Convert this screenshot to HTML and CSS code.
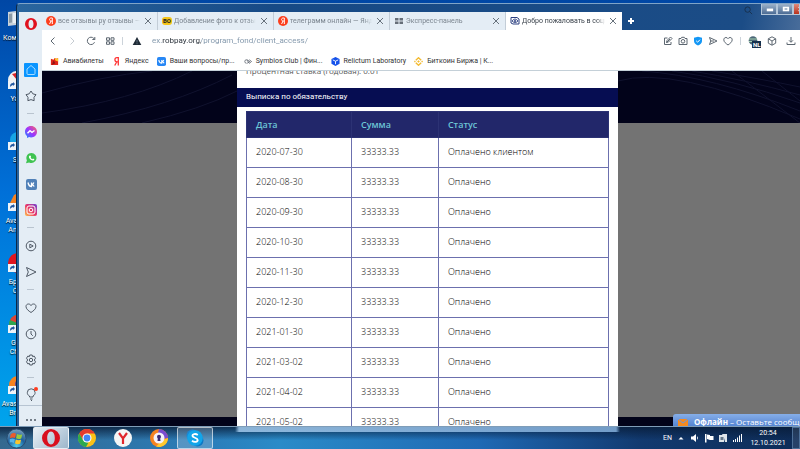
FILE: index.html
```html
<!DOCTYPE html>
<html lang="ru">
<head>
<meta charset="UTF-8">
<meta name="viewport" content="width=device-width, initial-scale=1.0">
<title>Добро пожаловать в социальный фонд</title>
<link rel="stylesheet" href="styles.css">
</head>
<body>
<div class="screen">
<!-- desktop shortcuts -->
<div class="desktop">
<div class="shortcut"><svg class="shortcut-icon" viewBox="0 0 16 18"><path d="M0 2l8-1v14l-8 1z" fill="#c9d3da"/><path d="M5 3h8v10H5z" fill="#e9f0f4"/><path d="M1 4l3-.4v9L1 13z" fill="#8b9aa5"/></svg><span>Компьютер</span></div>
<div class="shortcut"><svg class="shortcut-icon" viewBox="0 0 16 18"><circle cx="9" cy="9" r="9" fill="#f2f2f2"/><path d="M4 3l5 6 4-6v-2z" fill="#d9242b"/><path d="M0 10h8v8H0z" fill="#eef3f8"/><path d="M2 16c0-3 1-4 3-4v-1l2 2-2 2v-1c-1 0-2 1-3 2z" fill="#1f57a0"/></svg><span>Yandex</span></div>
<div class="shortcut"><svg class="shortcut-icon" viewBox="0 0 16 18"><circle cx="10" cy="8" r="8" fill="#17a5e5"/><path d="M0 10h8v8H0z" fill="#eef3f8"/><path d="M2 16c0-3 1-4 3-4v-1l2 2-2 2v-1c-1 0-2 1-3 2z" fill="#1f57a0"/></svg><span>Skype</span></div>
<div class="shortcut"><svg class="shortcut-icon" viewBox="0 0 16 18"><path d="M0 14L6 2l4-2 2 14z" fill="#f58220"/><path d="M0 10h8v8H0z" fill="#eef3f8"/><path d="M2 16c0-3 1-4 3-4v-1l2 2-2 2v-1c-1 0-2 1-3 2z" fill="#1f57a0"/></svg><span>Avast Free Antivirus</span></div>
<div class="shortcut"><svg class="shortcut-icon" viewBox="0 0 16 18"><circle cx="10" cy="9" r="10" fill="#e0151f"/><path d="M0 10h8v8H0z" fill="#eef3f8"/><path d="M2 16c0-3 1-4 3-4v-1l2 2-2 2v-1c-1 0-2 1-3 2z" fill="#1f57a0"/></svg><span>Браузер Opera</span></div>
<div class="shortcut"><svg class="shortcut-icon" viewBox="0 0 16 18"><circle cx="10" cy="9" r="9" fill="#2ea44f"/><path d="M2 5a9 9 0 0 1 10-5v9z" fill="#dd4336"/><path d="M0 10h8v8H0z" fill="#eef3f8"/><path d="M2 16c0-3 1-4 3-4v-1l2 2-2 2v-1c-1 0-2 1-3 2z" fill="#1f57a0"/></svg><span>Google Chrome</span></div>
<div class="shortcut"><svg class="shortcut-icon" viewBox="0 0 16 18"><circle cx="10" cy="9" r="9" fill="#f5821f"/><circle cx="12" cy="8" r="5" fill="#5b3fa0"/><path d="M0 10h8v8H0z" fill="#eef3f8"/><path d="M2 16c0-3 1-4 3-4v-1l2 2-2 2v-1c-1 0-2 1-3 2z" fill="#1f57a0"/></svg><span>Avast Secure Browser</span></div>
</div>

<!-- browser window -->
<div class="window">
<div class="window-controls">
<svg class="title-search" viewBox="0 0 10 10"><circle cx="4" cy="4" r="3"/><path d="M6 6l3 3"/></svg>
<button class="win-btn" aria-label="Свернуть"><svg viewBox="0 0 16 11"><path d="M5 5h7v3H5z" fill="#fff"/></svg></button>
<button class="win-btn" aria-label="Развернуть"><svg viewBox="0 0 16 11"><path d="M5 3h7v5H5z" fill="#fff"/><path d="M7 5h3v1H7z" fill="#4b6b94"/></svg></button>
<button class="win-btn win-close" aria-label="Закрыть"><svg viewBox="0 0 16 11"><path d="M5 3l6 5M11 3L5 8" stroke="#fff" stroke-width="2"/></svg></button>
</div>

<nav class="sidebar">
<button class="side-logo" aria-label="Opera"><svg viewBox="0 0 12 12"><path fill-rule="evenodd" fill="#e0121f" d="M6 0a6 6 0 1 1 0 12A6 6 0 0 1 6 0zm0 1.700C4.300 1.700 3.500 3.800 3.500 6s.8 4.300 2.500 4.300S8.500 8.200 8.500 6 7.700 1.700 6 1.700z"/></svg></button>
<button class="side-item side-active" aria-label="Главная"><svg class="line" viewBox="0 0 14 14"><path d="M3 6l4-3.500L11 6v4.500a1 1 0 0 1-1 1H4a1 1 0 0 1-1-1z"/></svg></button>
<button class="side-item" aria-label="Закладки"><svg class="line" viewBox="0 0 14 14"><path d="M7 2l1.800 2.800L12 5.700l-2 2.600.1 3.400L7 10.600l-3.100 1.100.1-3.400-2-2.600 3.200-.9z"/></svg></button>
<hr>
<button class="side-item" aria-label="Messenger"><svg viewBox="0 0 14 14"><defs><linearGradient id="msg" x1="0" y1="1" x2="1" y2="0"><stop offset="0" stop-color="#1a8cff"/><stop offset=".5" stop-color="#a033ff"/><stop offset="1" stop-color="#ff6a5e"/></linearGradient></defs><path fill="url(#msg)" d="M7 1c3.600 0 6 2.500 6 5.700s-2.400 5.700-6 5.700c-.7 0-1.300-.1-1.900-.3L3 13v-2C1.700 10 1 8.500 1 6.700 1 3.500 3.400 1 7 1z"/><path d="M3.500 8.300L6 5.700l2 1.600 2.500-1.800" fill="none" stroke="#fff" stroke-width="1.400"/></svg></button>
<button class="side-item" aria-label="WhatsApp"><svg viewBox="0 0 14 14"><path fill="#3fc351" d="M7.500 2a5 5 0 1 1-2.400 9.400L2 12.300l.9-3A5 5 0 0 1 7.500 2z"/><path fill="#fff" d="M5.700 4.500l1 .2.400 1.200-.5.700c.4.700.9 1.200 1.700 1.600l.7-.7 1.300.7c0 1-.7 1.400-1.500 1.400C6.500 9.200 4.700 7 4.900 5.400z"/></svg></button>
<button class="side-item" aria-label="ВКонтакте"><svg viewBox="0 0 14 14"><rect x="2" y="2" width="11" height="11" rx="2" fill="#5181b8"/><path d="M4 5.500c.5 2.500 1.700 4 3.500 4v-4M7.500 7.500c1.200 0 2-.8 2.300-2M7.500 7.500c1.200 0 2 .9 2.700 2" fill="none" stroke="#fff" stroke-width="1.300"/></svg></button>
<button class="side-item" aria-label="Instagram"><svg viewBox="0 0 14 14"><defs><linearGradient id="ins" x1="0" y1="1" x2="1" y2="0"><stop offset="0" stop-color="#fdc24c"/><stop offset=".5" stop-color="#e8336a"/><stop offset="1" stop-color="#6b44d6"/></linearGradient></defs><rect x="1" y="1" width="12" height="12" rx="2" fill="url(#ins)"/><rect x="3" y="3" width="8" height="8" rx="2" fill="none" stroke="#fff"/><circle cx="7" cy="7" r="1.800" fill="none" stroke="#fff"/></svg></button>
<hr>
<button class="side-item" aria-label="Плеер"><svg class="line" viewBox="0 0 14 14"><circle cx="7" cy="7" r="4.800"/><path d="M5.800 5.200L9.200 7 5.800 8.800z"/></svg></button>
<button class="side-item" aria-label="Отправить"><svg class="line" viewBox="0 0 14 14"><path d="M2.500 2.500L12 7l-9.500 4.500L4.300 7z"/></svg></button>
<hr>
<button class="side-item" aria-label="Избранное"><svg class="line" viewBox="0 0 14 14"><path d="M7 11.500C4.500 9.800 2 8 2 5.500 2 3.900 3.200 3 4.500 3 5.600 3 6.500 3.600 7 4.500 7.500 3.600 8.400 3 9.500 3 10.800 3 12 3.900 12 5.500 12 8 9.500 9.800 7 11.500z"/></svg></button>
<button class="side-item" aria-label="История"><svg class="line" viewBox="0 0 14 14"><circle cx="7" cy="7" r="4.800"/><path d="M7 4v3l1.800 1.800"/></svg></button>
<button class="side-item" aria-label="Настройки"><svg class="line" viewBox="0 0 14 14"><path d="M5.800 2h2.400l.4 1.600 1.600-.5 1.300 2.100L10.300 7l1.200 1.800-1.300 2.100-1.600-.5L8.200 12H5.800l-.4-1.600-1.600.5-1.300-2.100L3.700 7 2.500 5.200l1.300-2.100 1.600.5z"/><circle cx="7" cy="7" r="1.700"/></svg></button>
<hr>
<button class="side-item side-tip" aria-label="Подсказки"><svg class="line" viewBox="0 0 14 14"><path d="M5.500 9C3.800 8.200 3.300 6.800 3.300 5.700a3.900 3.900 0 0 1 7.800 0C11.100 6.800 10.600 8.200 9 9v1H5.500zM6 12h2.500M7 13.500h1"/><circle cx="12" cy="2" r="2" fill="#ff3b1f" stroke="none"/></svg></button>
<button class="side-more" aria-label="Ещё"><svg viewBox="0 0 10 4"><circle cx="1" cy="2" r="1"/><circle cx="5" cy="2" r="1"/><circle cx="9" cy="2" r="1"/></svg></button>
</nav>

<div class="browser">
<div class="tabs">
<div class="tab"><svg class="favicon" viewBox="0 0 10 10"><circle cx="5" cy="5" r="5" fill="#fc3f1d"/><path d="M6.300 8V2H5.200C3 2 3 5 5.200 5h1M5 5L3.600 8" fill="none" stroke="#fff"/></svg><a href="#">все отзывы ру отзывы — Яндекс</a><button class="tab-close" aria-label="Закрыть вкладку"><svg viewBox="0 0 6 6"><path d="M0 0l6 6M6 0L0 6"/></svg></button></div>
<div class="tab"><span class="favicon fav-bo">BO</span><a href="#">Добавление фото к отзыву</a><button class="tab-close" aria-label="Закрыть вкладку"><svg viewBox="0 0 6 6"><path d="M0 0l6 6M6 0L0 6"/></svg></button></div>
<div class="tab"><svg class="favicon" viewBox="0 0 10 10"><circle cx="5" cy="5" r="5" fill="#fc3f1d"/><path d="M6.300 8V2H5.200C3 2 3 5 5.200 5h1M5 5L3.600 8" fill="none" stroke="#fff"/></svg><a href="#">телеграмм онлайн — Яндекс</a><button class="tab-close" aria-label="Закрыть вкладку"><svg viewBox="0 0 6 6"><path d="M0 0l6 6M6 0L0 6"/></svg></button></div>
<div class="tab"><svg class="favicon" viewBox="0 0 10 10"><path d="M1 2h3.500v2.500H1zM5.500 2H9v2.500H5.500zM1 5.500h3.500V8H1zM5.500 5.500H9V8H5.500z" fill="#666e78"/></svg><a href="#">Экспресс-панель</a><button class="tab-close" aria-label="Закрыть вкладку"><svg viewBox="0 0 6 6"><path d="M0 0l6 6M6 0L0 6"/></svg></button></div>
<div class="tab tab-active"><svg class="favicon" viewBox="0 0 10 10"><path d="M1 1.500h6L9 3v5H3L1 7z" fill="none" stroke="#2b3f80"/><path d="M2 5c2-2.500 4-2.500 6 0-2 2-4 2-6 0z" fill="none" stroke="#2b3f80"/><circle cx="5" cy="5" r="1" fill="#2b3f80"/></svg><a href="#">Добро пожаловать в социальный</a><button class="tab-close" aria-label="Закрыть вкладку"><svg viewBox="0 0 6 6"><path d="M0 0l6 6M6 0L0 6"/></svg></button></div>
<button class="tab-new" aria-label="Новая вкладка"><svg viewBox="0 0 8 8"><path d="M4 1v6M1 4h6" stroke="#fff" stroke-width="2"/></svg></button>
</div>

<div class="toolbar">
<div class="nav-buttons">
<button class="tool" aria-label="Назад"><svg class="line" viewBox="0 0 10 10"><path d="M6.500 1.500L3 5l3.500 3.500"/></svg></button>
<button class="tool tool-off" aria-label="Вперёд"><svg class="line" viewBox="0 0 10 10"><path d="M3.500 1.500L7 5 3.500 8.500"/></svg></button>
<button class="tool" aria-label="Обновить"><svg class="line" viewBox="0 0 10 10"><path d="M8.500 6.200A3.700 3.700 0 1 1 7.800 2.400L8.800 3.500M8.800 1v2.500H6.300"/></svg></button>
<button class="tool" aria-label="Экспресс-панель"><svg class="line" viewBox="0 0 10 10"><path d="M1.500 1.800h3v2.500h-3zM6 1.800h3v2.500H6zM1.500 5.800h3v2.500h-3zM6 5.800h3v2.500H6z"/></svg></button>
</div>
<span class="divider"></span>
<svg class="warn" viewBox="0 0 10 10"><path d="M5 1l4.300 8H.7z" fill="#1e2a36"/><path d="M5 4v2.500M5 7.200v1" stroke="#8090a0" stroke-width=".7"/></svg>
<input class="address" type="text" aria-label="Адрес" value="ex.robpay.org/program_fond/client_access/">
<div class="page-tools">
<button class="tool" aria-label="Заметки"><svg class="line" viewBox="0 0 10 10"><path d="M4.500 2H1.500v6.500h6.500V6M3.500 6.500l.5-2L7.500 1l1.500 1.500L5.500 6zM3.500 6.500L7 3"/></svg></button>
<button class="tool" aria-label="Снимок"><svg class="line" viewBox="0 0 10 10"><path d="M1 2.500h2l.7-1.200h2.600L7 2.500h2v6H1z"/><circle cx="5" cy="5.300" r="1.800"/></svg></button>
<button class="tool" aria-label="Защита"><svg viewBox="0 0 10 10"><path d="M5 .8l4 1V5c0 2-1.800 3.500-4 4.500C2.800 8.500 1 7 1 5V1.800z" fill="#1497f5"/><path d="M3.200 4.800l1.400 1.400 2.400-2.500" fill="none" stroke="#fff"/></svg></button>
<button class="tool" aria-label="Моё облако"><svg class="line" viewBox="0 0 10 10"><path d="M1.500 1.500L9 5 1.500 8.500 2.800 5zM2.800 5H6"/></svg></button>
<button class="tool" aria-label="В избранное"><svg class="line" viewBox="0 0 10 10"><path d="M5 9C3 7.500.8 6 .8 3.800.8 2.400 1.700 1.500 3 1.500c.9 0 1.600.5 2 1.200.4-.7 1.100-1.200 2-1.200 1.300 0 2.200.9 2.200 2.300C9.200 6 7 7.500 5 9z"/></svg></button>
</div>
<span class="divider"></span>
<div class="ext-tools">
<button class="tool tool-vpn" aria-label="VPN"><svg viewBox="0 0 10 10"><circle cx="5" cy="4.500" r="4.300" fill="#4c6878"/><path d="M1 3h8M1 5.500h8" stroke="#a7d3b1"/></svg><span class="vpn-badge">NL</span></button>
<button class="tool" aria-label="Расширения"><svg class="line" viewBox="0 0 10 10"><path d="M5 .8l3.700 2v4.400L5 9.200l-3.700-2V2.800zM1.300 2.800L5 5l3.700-2.200M5 5v4.200"/></svg></button>
<button class="tool" aria-label="Загрузки"><svg class="line" viewBox="0 0 10 10"><path d="M5 1v5M3 4.300L5 6.300l2-2M1 6.500v2h8v-2"/></svg></button>
</div>
</div>

<div class="bookmarks">
<a href="#"><svg viewBox="0 0 10 10"><path d="M1 2l3 1 1-2 2 1 2-1v8H1z" fill="#e0251b"/><path d="M5 1l2 1 2-1v4L6 4z" fill="#ffc62b"/><path d="M2 9l2-5 2 3" fill="#8d1414"/></svg>Авиабилеты</a>
<a href="#"><svg viewBox="0 0 10 10"><path d="M7 9.500V.8H5.500C2.500.8 2.500 5.500 5.500 5.500H7M5.200 5.500L3 9.500" fill="none" stroke="#f33" stroke-width="1.400"/></svg>Яндекс</a>
<a href="#"><svg viewBox="0 0 10 10"><rect width="10" height="10" rx="2" fill="#2787f5"/><path d="M2 3.300c.4 2.400 1.500 3.700 3.300 3.700V3.300M5.300 5c1.200 0 1.800-.7 2.200-1.700M5.300 5c1.200 0 2 .8 2.600 2" fill="none" stroke="#fff" stroke-width="1.200"/></svg>Ваши вопросы/пр...</a>
<a href="#"><svg viewBox="0 0 10 10"><path d="M4 3a2 2 0 1 0 0 4M4 3l3 4M4.500 7l3-2-3-2M7 3l2.500 2L7 7" fill="none" stroke="#4e5560" stroke-width=".8"/></svg>Symbios Club | Фин...</a>
<a href="#"><svg viewBox="0 0 10 10"><path d="M5 0l4.500 2.200v5.300L5 10 .5 7.500V2.200z" fill="#1552ea"/><path d="M2 3.200l3 1.500 3-1.500M5 4.700V8" stroke="#fff" fill="none"/></svg>Relictum Laboratory</a>
<a href="#"><svg viewBox="0 0 10 10"><path d="M2 3.500L5 .8l3 2.700M2 6.500l3 2.700 3-2.700" fill="none" stroke="#f3ba2f" stroke-width="1.500"/><path d="M5 3.500L6.500 5 5 6.500 3.500 5zM1 4l1 1-1 1-1-1zM9 4l1 1-1 1-1-1z" fill="#f3ba2f"/></svg>Биткоин Биржа | К...</a>
</div>

<!-- page -->
<main class="page">
<svg class="waves" viewBox="0 0 758 52" preserveAspectRatio="none"><path d="M0 22Q60 5 110 0M0 42Q90 30 150 0M40 52Q130 35 190 4M100 52Q160 38 195 20M576 10Q630-6 758 48M600 0Q670 5 758 40M630 0Q690 8 758 32M650 0Q700 8 758 24M670 0Q720 8 758 16M690 0L758 52M720 0L758 30"/></svg>
<div class="panel">
<p class="rate">Процентная ставка (годовая): 0.01</p>
<h2>Выписка по обязательству</h2>
<table>
<thead>
<tr><th class="col-date">Дата</th><th class="col-sum">Сумма</th><th>Статус</th></tr>
</thead>
<tbody>
<tr><td>2020-07-30</td><td>33333.33</td><td>Оплачено клиентом</td></tr>
<tr><td>2020-08-30</td><td>33333.33</td><td>Оплачено</td></tr>
<tr><td>2020-09-30</td><td>33333.33</td><td>Оплачено</td></tr>
<tr><td>2020-10-30</td><td>33333.33</td><td>Оплачено</td></tr>
<tr><td>2020-11-30</td><td>33333.33</td><td>Оплачено</td></tr>
<tr><td>2020-12-30</td><td>33333.33</td><td>Оплачено</td></tr>
<tr><td>2021-01-30</td><td>33333.33</td><td>Оплачено</td></tr>
<tr><td>2021-03-02</td><td>33333.33</td><td>Оплачено</td></tr>
<tr><td>2021-04-02</td><td>33333.33</td><td>Оплачено</td></tr>
<tr><td>2021-05-02</td><td>33333.33</td><td>Оплачено</td></tr>
</tbody>
</table>
</div>
<button class="chat"><svg viewBox="0 0 10 8"><path d="M0 1h10v7H0z" fill="#f58a1f"/><path d="M0 1l5 4 5-4" fill="none" stroke="#6d97dc"/></svg><span><b>Офлайн</b> – Оставьте сообщение</span></button>
</main>
</div>
</div>
</div>

<!-- taskbar -->
<footer class="taskbar">
<button class="start" aria-label="Пуск"><svg viewBox="0 0 22 22"><defs><radialGradient id="orb" cx=".5" cy=".9" r=".9"><stop offset="0" stop-color="#4fd0f0"/><stop offset=".5" stop-color="#1d5f9c"/><stop offset="1" stop-color="#7fa3bd"/></radialGradient></defs><circle cx="11" cy="11" r="10" fill="url(#orb)" stroke="#294d70"/><path d="M5 6.500q3-2 5.500-.5l-1 4.500q-2.500-1.200-5.500.2z" fill="#ee5b2a"/><path d="M11.500 6.300q3 1.500 5.500.2l-1 4.500q-3 1.300-5.500-.2z" fill="#9acb3c"/><path d="M3.800 11.700q3-1.500 5.500-.2l-1 4.300q-2-1.500-4.500-.5z" fill="#56b4ea"/><path d="M10.300 12.100q2.500 1.300 5.500.2l-1 4.200q-3 1.200-5.400-.4z" fill="#fcc52c"/></svg></button>
<button class="task task-lit" aria-label="Opera"><svg viewBox="0 0 18 18"><path fill-rule="evenodd" fill="#d90f1e" d="M9 0a9 9 0 1 1 0 18A9 9 0 0 1 9 0zm0 2.500C6.500 2.500 5.200 5.500 5.200 9s1.300 6.500 3.800 6.500S12.800 12.500 12.800 9 11.500 2.500 9 2.500z"/></svg></button>
<button class="task" aria-label="Chrome"><svg viewBox="0 0 18 18"><circle cx="9" cy="9" r="9" fill="#fbc116"/><path d="M1.200 4.500A9 9 0 0 1 16.800 4.500H9L5.100 11.300z" fill="#e33b2e"/><path d="M1.200 4.500L5.100 11.300 9 13.500h1.500L8 18A9 9 0 0 1 1.200 4.500z" fill="#2da94f"/><circle cx="9" cy="9" r="4.500" fill="#fff"/><circle cx="9" cy="9" r="3.400" fill="#4285f4"/></svg></button>
<button class="task" aria-label="Яндекс Браузер"><svg viewBox="0 0 18 18"><circle cx="9" cy="9" r="9" fill="#f5f5f5"/><path d="M5 4l4 5.500L13 4M9 9v6" fill="none" stroke="#e0262c" stroke-width="2.200"/></svg></button>
<button class="task" aria-label="Avast Browser"><svg viewBox="0 0 18 18"><circle cx="9" cy="9" r="9" fill="#f58220"/><path d="M9 0a9 9 0 0 1 9 9l-6 1-4-6z" fill="#7a4bd0"/><path d="M18 9a9 9 0 0 1-12 8.500l6-6z" fill="#ffc92e"/><circle cx="9" cy="9" r="5.500" fill="#f3f1fa"/><circle cx="9" cy="7.700" r="2" fill="#3a2a74"/><path d="M8 8h2l.5 4h-3z" fill="#3a2a74"/></svg></button>
<button class="task task-open" aria-label="Skype"><svg viewBox="0 0 18 18"><circle cx="6.500" cy="6.500" r="6" fill="#1c87d4"/><circle cx="11.500" cy="11.500" r="6" fill="#0b79c7"/><circle cx="9" cy="9" r="7.800" fill="#12a5ea"/><path d="M11.800 6C9.500 4.300 6.300 5 6.500 7c.3 2 5 1.500 5.200 4 .1 2-3.500 2.500-5.700.7" fill="none" stroke="#fff" stroke-width="1.800"/></svg></button>
<div class="tray">
<span>EN</span>
<svg viewBox="0 0 10 10"><path d="M2.500 6.500L5 4l2.500 2.500z"/></svg>
<svg viewBox="0 0 10 10"><path d="M1 3.500h2L6 1v8L3 6.500H1zM7 3v4l1-2z"/></svg>
<svg viewBox="0 0 10 10"><path d="M1 1h1.500v8.500H1zM3 1.500l3 .5v1h3.500v4H6L3 6z"/></svg>
<svg viewBox="0 0 10 10"><path d="M1 2h5v7H1zM4 1h5v4H6zM6 5h3v4H7z" fill="#dfe5ea"/><path d="M2.500 4h3v3h-3z" fill="#66788a"/></svg>
<svg viewBox="0 0 10 10"><path d="M1 7h1v2H1zM3 6h1v3H3zM5 4.500h1V9H5zM7 2.500h1V9H7zM9 1h1v8H9z"/></svg>
<time class="clock" datetime="2021-10-12T20:54"><span>20:54</span><span>12.10.2021</span></time>
</div>
<button class="show-desktop" aria-label="Показать рабочий стол"></button>
</footer>
</body>
</html>
```
FILE: styles.css
```css
* {
box-sizing: border-box;
}

body {
margin: 0;
height: 100vh;
display: flex;
flex-direction: column;
overflow: hidden;
font-family: Roboto, "Noto Sans", sans-serif;
font-size: 7px;
line-height: 10px;
color: #333;
}

button {
padding: 0;
border: none;
background: none;
font: inherit;
color: inherit;
display: flex;
align-items: center;
justify-content: center;
}

a {
color: inherit;
text-decoration: none;
}

svg {
display: block;
flex: none;
}

.line {
fill: none;
stroke: #5d6771;
stroke-width: 1;
}

.screen {
flex: 1;
min-height: 0;
display: flex;
background: linear-gradient(#0047a5, #0070d8 45%, #00a4ec);
}

/* desktop */
.desktop {
width: 16px;
overflow: hidden;
padding-top: 9px;
}

.shortcut {
height: 61px;
color: #fff;
text-shadow: 0 1px 1px #000;
line-height: 9px;
}

.shortcut-icon {
width: 16px;
height: 20px;
margin: 0 0 5px 8px;
}

.shortcut span {
display: block;
width: 44px;
text-align: center;
}

/* window frame */
.window {
position: relative;
flex: 1;
min-width: 0;
display: flex;
margin-top: 3px;
padding: 8px 0 0 2px;
border-top: 1px solid #7fa4c8;
border-left: 1px solid #0b2848;
border-radius: 4px 0 0 0;
background: linear-gradient(100deg, #2a669f, #174a86 30%, #1b4c86 85%, #7e93b2);
}

.window-controls {
position: absolute;
top: 0;
right: 0;
display: flex;
align-items: flex-start;
}

.title-search {
width: 9px;
height: 9px;
margin: 2px 8px 0 0;
fill: none;
stroke: #18304c;
}

.win-btn {
width: 16px;
height: 11px;
border: 1px solid #b4c6d9;
border-top: none;
background: linear-gradient(#9db2ca, #4b6b94);
}

.win-btn svg {
width: 15px;
height: 10px;
}

.win-close {
width: 7px;
justify-content: flex-start;
overflow: hidden;
background: linear-gradient(#e08a7c, #b8311c);
}

/* sidebar */
.sidebar {
width: 23px;
display: flex;
flex-direction: column;
background: #e4edf5;
}

.sidebar hr {
width: 7px;
height: 1px;
margin: 4px auto 5px;
border: none;
background: #b9c4cf;
}

.side-logo {
height: 45px;
padding-bottom: 22px;
}

.side-logo svg {
width: 12px;
height: 12px;
}

.side-item {
height: 26px;
}

.side-item svg {
width: 14px;
height: 14px;
}

.side-item .line {
stroke: #4f5965;
}

.side-active .line {
background: #0a95ff;
border-radius: 1px;
stroke: #a9ddff;
}

.side-tip {
height: 22px;
}

.side-more {
flex: 1;
padding-top: 8px;
border-top: 1px solid #b7c4d2;
}

.side-more svg {
width: 10px;
height: 4px;
fill: #4f5965;
}

/* browser */
.browser {
flex: 1;
min-width: 0;
display: flex;
flex-direction: column;
}

.tabs {
display: flex;
height: 18px;
}

.tab {
flex: 0 1 116px;
min-width: 0;
display: flex;
align-items: center;
gap: 2px;
padding: 0 3px 0 4px;
background: #e4edf5;
border-right: 1px solid #c3cdd7;
color: #7b858f;
}

.tab a {
flex: 1;
overflow: hidden;
white-space: nowrap;
-webkit-mask-image: linear-gradient(90deg, #000 90%, transparent);
mask-image: linear-gradient(90deg, #000 90%, transparent);
}

.tab-active {
background: #fff;
border-right: none;
color: #39414a;
}

.favicon {
width: 10px;
height: 10px;
}

.fav-bo {
height: 8px;
border-radius: 3px;
background: #f5c518;
color: #222;
font-size: 6px;
font-weight: 700;
line-height: 8px;
text-align: center;
}

.tab-close {
width: 12px;
height: 12px;
}

.tab-close svg {
width: 6px;
height: 6px;
stroke: #68727c;
}

.tab-new {
width: 17px;
}

.tab-new svg {
width: 8px;
height: 8px;
}

.toolbar {
display: flex;
align-items: center;
height: 22px;
padding: 0 4px 0 6px;
background: #fff;
}

.nav-buttons {
display: flex;
gap: 9px;
}

.tool,
.tool svg {
width: 10px;
height: 10px;
}

.tool-off .line {
stroke: #c5cbd1;
}

.divider {
width: 1px;
height: 8px;
margin: 0 7px;
background: #ccd3da;
}

.warn {
width: 10px;
height: 10px;
margin: 0 10px 0 2px;
}

/* the domain is darker than the rest of the address */
.address {
flex: 1;
min-width: 0;
padding: 0;
border: none;
outline: none;
font: inherit;
font-size: 8px;
color: transparent;
background: linear-gradient(90deg, #7d93a8 10px, #252d36 10px, #252d36 49px, #7d93a8 49px);
-webkit-background-clip: text;
background-clip: text;
}

.page-tools {
display: flex;
gap: 5px;
}

.ext-tools {
display: flex;
gap: 9px;
}

.tool-vpn {
position: relative;
}

.vpn-badge {
position: absolute;
top: 5px;
left: 4px;
padding: 0 1px;
background: #15304d;
color: #fff;
font-size: 6px;
font-weight: 700;
line-height: 7px;
}

.bookmarks {
display: flex;
align-items: center;
gap: 8px;
height: 19px;
padding: 0 8px;
border-bottom: 1px solid #c4d0d8;
background: #fff;
white-space: nowrap;
}

.bookmarks a {
display: flex;
align-items: center;
gap: 4px;
}

.bookmarks svg {
width: 9px;
height: 9px;
}

/* page content */
.page {
position: relative;
flex: 1;
min-height: 0;
overflow: hidden;
padding: 0 24% 0 195px;
background: linear-gradient(#02031a 52px, #737373 52px, #737373 calc(100% - 9px), #02031a calc(100% - 9px));
}

.waves {
position: absolute;
top: 0;
left: 0;
width: 100%;
height: 52px;
fill: none;
stroke: #10122e;
}

.panel {
position: relative;
height: 100%;
overflow: hidden;
background: #fff;
font-family: "Open Sans", "Noto Sans", sans-serif;
font-size: 9px;
line-height: 12px;
}

.rate {
height: 17px;
margin: 0;
padding-left: 9px;
line-height: 0;
font-size: 8px;
color: #555;
}

.panel h2 {
margin: 0;
padding: 3px 9px 4px;
background: #060d52;
color: #fff;
font-family: Roboto, "Noto Sans", sans-serif;
font-size: 8px;
font-weight: 400;
}

.panel table {
width: calc(100% - 18px);
margin: 4px 9px 0;
border-collapse: collapse;
table-layout: fixed;
}

.panel th,
.panel td {
padding: 0 9px;
border: 1px solid #6c70ae;
text-align: left;
}

.panel th {
height: 26px;
border-color: #2c3274;
background: #22276a;
color: #6cc5d6;
font-weight: 600;
}

.panel td {
height: 30px;
padding-bottom: 1px;
font-weight: 300;
color: #000;
}

.col-date {
width: 29%;
}

.col-sum {
width: 24%;
}

.chat {
position: absolute;
right: 0;
bottom: 0;
width: 127px;
height: 12px;
justify-content: flex-start;
gap: 6px;
padding: 3px 0 0 5px;
overflow: hidden;
border-radius: 3px 0 0 0;
background: linear-gradient(#86aee8, #5685d2);
color: #fff;
font-family: "Open Sans", "Noto Sans", sans-serif;
font-size: 8px;
white-space: nowrap;
}

.chat svg {
width: 10px;
height: 8px;
}

/* taskbar, the window's glass edge shows through its top */
.taskbar {
display: flex;
align-items: stretch;
height: 23px;
border-top: 1px solid #7f9db8;
background:
linear-gradient(90deg, transparent 235px, rgba(170, 210, 245, 0.8) 239px, rgba(140, 185, 230, 0.8) 616px, transparent 620px) top / 100% 5px no-repeat,
linear-gradient(rgba(8, 28, 56, 0.8), transparent 60%),
linear-gradient(90deg, #35698f, #2b7cb8 25%, #2a8bc8 35%, #1f69b4 60%, #123a70 80%, #0e2c57);
color: #fff;
}

.start {
width: 33px;
}

.start svg {
width: 21px;
height: 21px;
}

.task {
width: 36px;
}

.task svg {
width: 18px;
height: 18px;
}

.task-lit,
.task-open {
border: 1px solid rgba(255, 255, 255, 0.6);
border-radius: 2px;
background: rgba(255, 255, 255, 0.2);
}

.task-lit {
background: linear-gradient(135deg, #e8f0f6, #9db6cb);
}

.tray {
display: flex;
align-items: center;
gap: 4px;
margin-left: auto;
}

.tray svg {
width: 10px;
height: 10px;
fill: #fff;
}

.clock {
display: flex;
flex-direction: column;
align-items: center;
width: 44px;
}

.show-desktop {
width: 8px;
margin-left: 2px;
border: 1px solid #4c6f97;
background: rgba(255, 255, 255, 0.1);
}
```
